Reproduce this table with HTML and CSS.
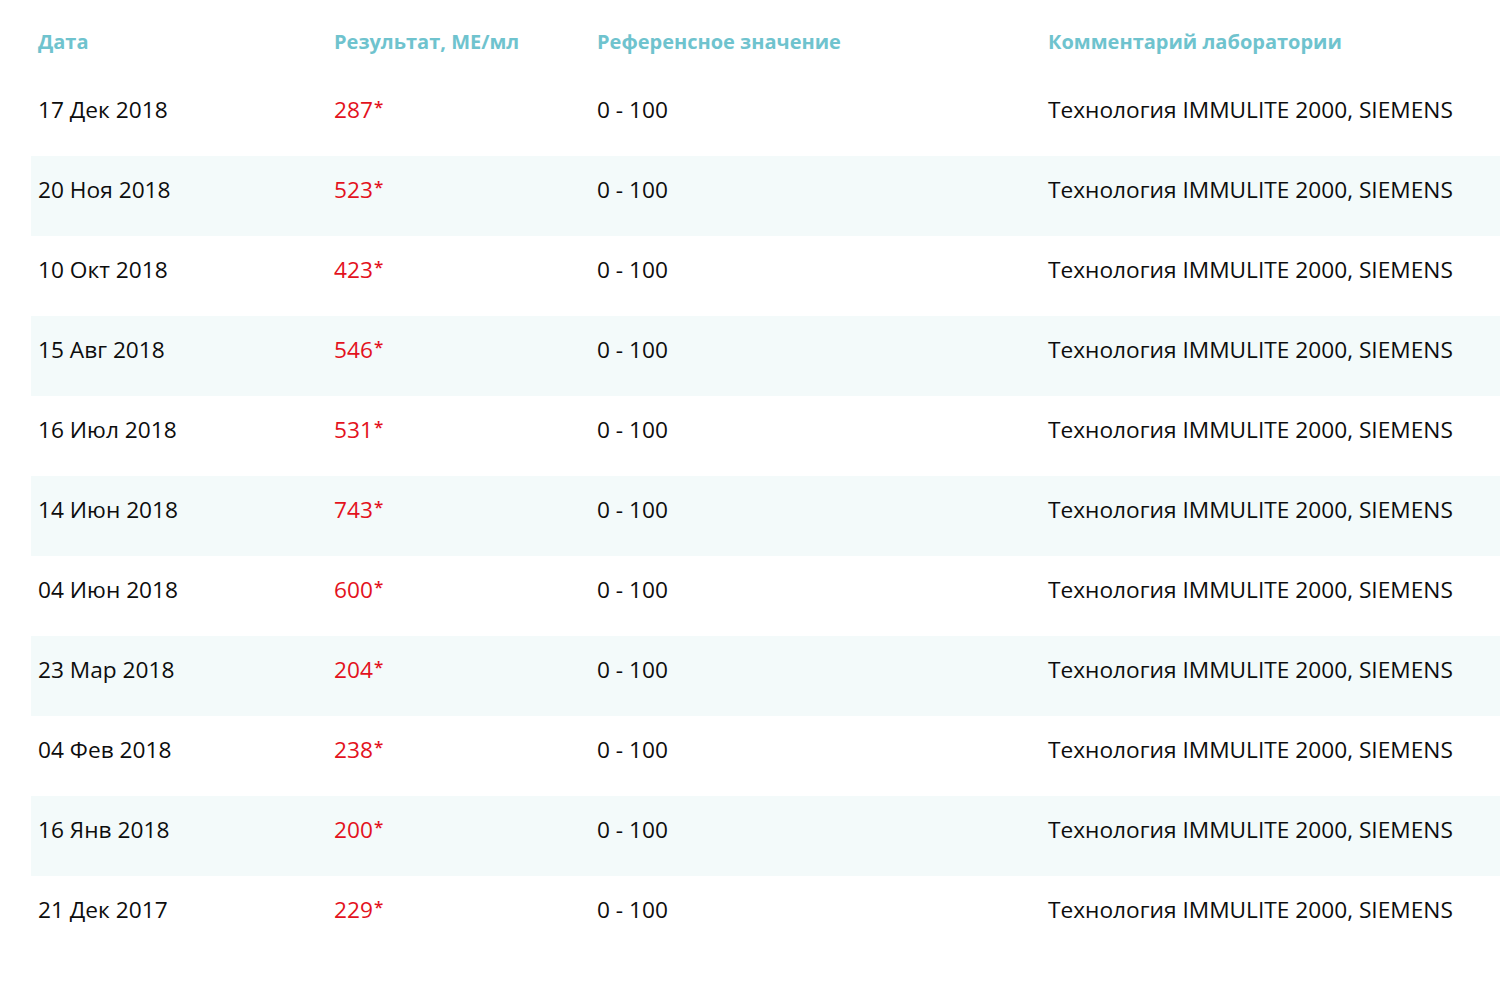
FILE: index.html
```html
<!DOCTYPE html>
<html lang="ru">
<head>
<meta charset="utf-8">
<link rel="stylesheet" href="styles.css">
</head>
<body>
<div class="results">
  <div class="row head">
    <div class="cell">Дата</div>
    <div class="cell">Результат, МЕ/мл</div>
    <div class="cell">Референсное значение</div>
    <div class="cell">Комментарий лаборатории</div>
  </div>
  <div class="row"><div class="cell">17 Дек 2018</div><div class="cell val">287<span class="mark">*</span></div><div class="cell">0 - 100</div><div class="cell">Технология IMMULITE 2000, SIEMENS</div></div>
  <div class="row"><div class="cell">20 Ноя 2018</div><div class="cell val">523<span class="mark">*</span></div><div class="cell">0 - 100</div><div class="cell">Технология IMMULITE 2000, SIEMENS</div></div>
  <div class="row"><div class="cell">10 Окт 2018</div><div class="cell val">423<span class="mark">*</span></div><div class="cell">0 - 100</div><div class="cell">Технология IMMULITE 2000, SIEMENS</div></div>
  <div class="row"><div class="cell">15 Авг 2018</div><div class="cell val">546<span class="mark">*</span></div><div class="cell">0 - 100</div><div class="cell">Технология IMMULITE 2000, SIEMENS</div></div>
  <div class="row"><div class="cell">16 Июл 2018</div><div class="cell val">531<span class="mark">*</span></div><div class="cell">0 - 100</div><div class="cell">Технология IMMULITE 2000, SIEMENS</div></div>
  <div class="row"><div class="cell">14 Июн 2018</div><div class="cell val">743<span class="mark">*</span></div><div class="cell">0 - 100</div><div class="cell">Технология IMMULITE 2000, SIEMENS</div></div>
  <div class="row"><div class="cell">04 Июн 2018</div><div class="cell val">600<span class="mark">*</span></div><div class="cell">0 - 100</div><div class="cell">Технология IMMULITE 2000, SIEMENS</div></div>
  <div class="row"><div class="cell">23 Мар 2018</div><div class="cell val">204<span class="mark">*</span></div><div class="cell">0 - 100</div><div class="cell">Технология IMMULITE 2000, SIEMENS</div></div>
  <div class="row"><div class="cell">04 Фев 2018</div><div class="cell val">238<span class="mark">*</span></div><div class="cell">0 - 100</div><div class="cell">Технология IMMULITE 2000, SIEMENS</div></div>
  <div class="row"><div class="cell">16 Янв 2018</div><div class="cell val">200<span class="mark">*</span></div><div class="cell">0 - 100</div><div class="cell">Технология IMMULITE 2000, SIEMENS</div></div>
  <div class="row"><div class="cell">21 Дек 2017</div><div class="cell val">229<span class="mark">*</span></div><div class="cell">0 - 100</div><div class="cell">Технология IMMULITE 2000, SIEMENS</div></div>
</div>
</body>
</html>
```
FILE: styles.css
```css
html, body {
  margin: 0;
  padding: 0;
  background: #fff;
}
body {
  font-family: "Open Sans", "Liberation Sans", sans-serif;
  color: #0d0d0d;
}
.results {
  margin-left: 31px;
  padding-top: 6px;
}
.row {
  display: grid;
  grid-template-columns: 296px 263px 451px 1fr;
  height: 80px;
  box-sizing: border-box;
  padding-bottom: 13px;
  align-items: center;
  font-size: 22.7px;
}
.row:nth-child(odd) {
  background: #f3fafa;
}
.row.head {
  height: 70px;
  padding-bottom: 0;
  background: none;
  font-weight: 700;
  font-size: 20px;
  color: #6fc3ce;
  align-items: start;
  padding-top: 22px;
}
.cell {
  padding-left: 7px;
  white-space: nowrap;
}
.val {
  color: #e3121d;
}
.mark {
  font-size: 17px;
  font-weight: 600;
  position: relative;
  top: -5px;
  margin-left: 1px;
}
```
